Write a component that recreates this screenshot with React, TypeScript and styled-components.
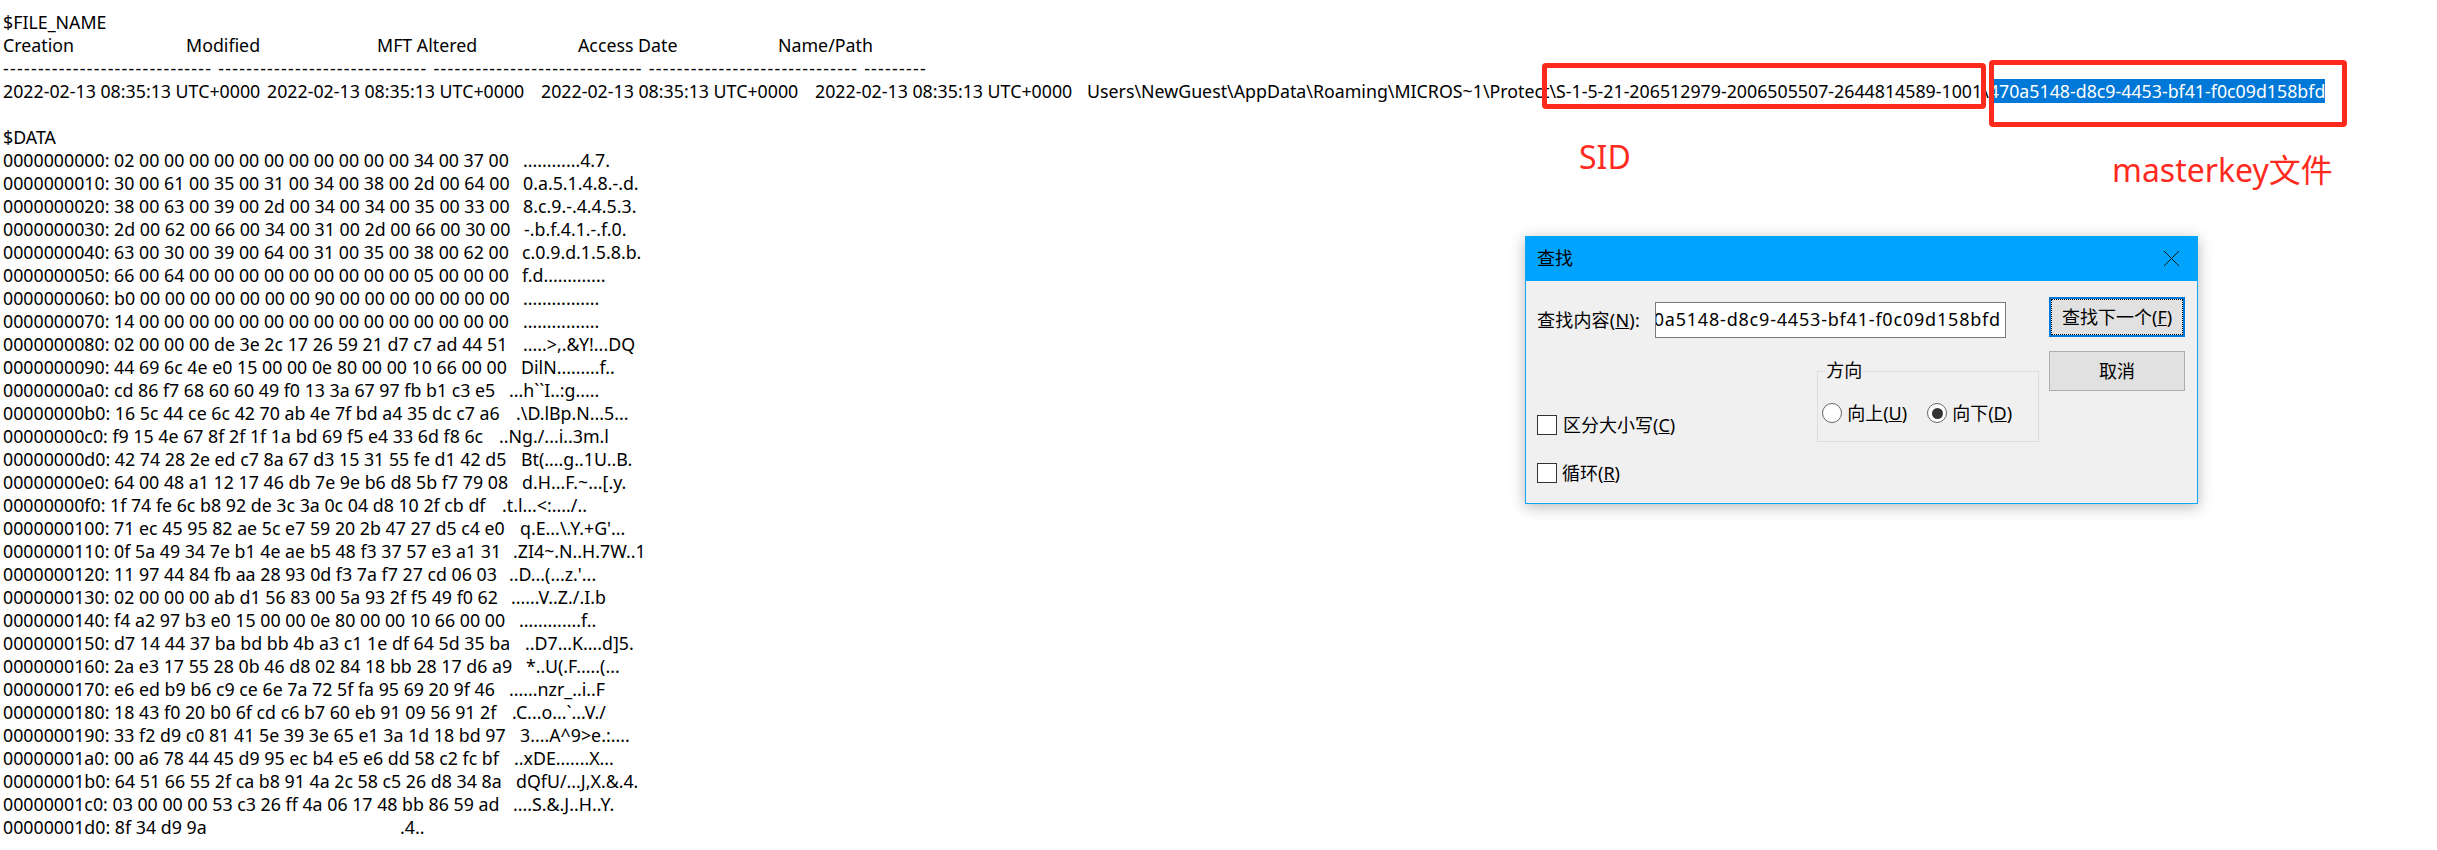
import { ReactNode } from 'react'
import styled, { createGlobalStyle } from 'styled-components'

const GlobalStyle = createGlobalStyle`
  html, body {
    margin: 0;
    padding: 0;
    background: #fff;
  }
  * {
    box-sizing: border-box;
  }
`

const CJK_STACK = `"Noto Sans", "Noto Sans CJK SC", sans-serif`

const Page = styled.div`
  position: relative;
  width: 2437px;
  height: 850px;
  overflow: hidden;
  padding: 11px 0 0 3px;
  background: #fff;
  color: #000;
  font-family: ${CJK_STACK};
  font-size: 17.8px;
  line-height: 23px;
  white-space: pre;
`

const Line = styled.div`
  height: 23px;
`

const HeaderRow = styled.div`
  display: grid;
  grid-template-columns: 183px 191px 201px 200px 1fr;
  height: 23px;
`

const DashRow = styled.div`
  display: flex;
  gap: 6px;
  height: 23px;
  letter-spacing: 1.25px;
`

const DateRow = styled.div`
  display: grid;
  grid-template-columns: 264px 274px 274px 272px 1fr;
  height: 23px;
`

const Selected = styled.span`
  background: #0078d7;
  color: #fff;
`

const HexRow = styled.div`
  display: grid;
  grid-template-columns: 400px 1fr;
  height: 23px;
`

const HexText = styled.span`
  grid-column: 1 / 3;
  grid-row: 1;
`

const AsciiCell = styled.span<{ $x: number }>`
  grid-column: 2;
  grid-row: 1;
  margin-left: ${(props) => props.$x - 403}px;
`

const RedBox = styled.div<{ $x: number; $y: number; $w: number; $h: number }>`
  position: absolute;
  left: ${(props) => props.$x}px;
  top: ${(props) => props.$y}px;
  width: ${(props) => props.$w}px;
  height: ${(props) => props.$h}px;
  border: 5px solid #ff2a1e;
  border-radius: 4px;
`

const RedLabel = styled.div<{ $x: number; $y: number }>`
  position: absolute;
  left: ${(props) => props.$x}px;
  top: ${(props) => props.$y}px;
  color: #ff2a1e;
  font-size: 32px;
  line-height: 44px;
`

// Find dialog
const Dialog = styled.div`
  position: absolute;
  left: 1525px;
  top: 236px;
  width: 673px;
  height: 268px;
  border: 1px solid #0ea5f5;
  background: #f0f0f0;
  box-shadow: 0 3px 14px rgba(0, 0, 0, 0.28);
  font-size: 18px;
  line-height: 24px;
`

const TitleBar = styled.div`
  display: flex;
  align-items: center;
  justify-content: space-between;
  height: 44px;
  padding: 0 17px 2px 11px;
  background: #00a4ff;
`

const DialogBody = styled.div`
  display: flex;
  padding: 16px 12px 0 11px;
`

const LeftColumn = styled.div`
  width: 513px;
`

const ButtonColumn = styled.div`
  display: flex;
  flex-direction: column;
  gap: 14px;
  width: 136px;
`

const SearchRow = styled.div`
  display: flex;
  align-items: center;
  margin-top: 5px;
`

const SearchLabel = styled.span`
  width: 118px;
  letter-spacing: 0.2px;
`

const SearchInput = styled.div`
  display: flex;
  justify-content: flex-end;
  width: 351px;
  height: 36px;
  padding-right: 4px;
  overflow: hidden;
  border: 1px solid #7a7a7a;
  background: #fff;
  letter-spacing: 0.8px;
  line-height: 32px;
`

const OptionsRow = styled.div`
  display: flex;
  justify-content: space-between;
  margin-top: 33px;
`

const CheckColumn = styled.div`
  display: flex;
  flex-direction: column;
  gap: 28px;
  padding-top: 44px;
`

const CheckRow = styled.div<{ $gap: number }>`
  display: flex;
  align-items: center;
  gap: ${(props) => props.$gap}px;
  height: 20px;
`

const CheckBox = styled.span`
  width: 20px;
  height: 20px;
  border: 1px solid #333;
  background: #fff;
`

const GroupBox = styled.div`
  position: relative;
  display: flex;
  width: 222px;
  height: 71px;
  margin-right: 10px;
  padding: 31px 0 0 4px;
  border: 1px solid #dcdcdc;
`

const GroupLegend = styled.span`
  position: absolute;
  left: 7px;
  top: -14px;
  padding: 0 1px;
  background: #f0f0f0;
`

const RadioOption = styled.div`
  display: flex;
  align-items: center;
  gap: 5px;
  width: 105px;
  height: 20px;
`

const Radio = styled.span<{ $checked?: boolean }>`
  display: flex;
  align-items: center;
  justify-content: center;
  width: 20px;
  height: 20px;
  border: 1px solid #666;
  border-radius: 50%;
  background: #fff;

  &::after {
    content: '';
    display: ${(props) => (props.$checked ? 'block' : 'none')};
    width: 11px;
    height: 11px;
    border-radius: 50%;
    background: #333;
  }
`

const DialogButton = styled.div<{ $focused?: boolean }>`
  display: flex;
  align-items: center;
  justify-content: center;
  height: 40px;
  border: ${(props) => (props.$focused ? '2px solid #0078d7' : '1px solid #adadad')};
  background: #e1e1e1;
  outline: ${(props) => (props.$focused ? '1px dotted #000' : 'none')};
  outline-offset: ${(props) => (props.$focused ? '-3px' : '0')};
`

const headers = ['Creation', 'Modified', 'MFT Altered', 'Access Date', 'Name/Path']
const dashes = [30, 30, 30, 30, 9]
const stamp = '2022-02-13 08:35:13 UTC+0000'

const rows: [string, string, string, number][] = [
  ['0000000000', '02 00 00 00 00 00 00 00 00 00 00 00 34 00 37 00', '............4.7.', 523],
  ['0000000010', '30 00 61 00 35 00 31 00 34 00 38 00 2d 00 64 00', '0.a.5.1.4.8.-.d.', 523],
  ['0000000020', '38 00 63 00 39 00 2d 00 34 00 34 00 35 00 33 00', '8.c.9.-.4.4.5.3.', 523],
  ['0000000030', '2d 00 62 00 66 00 34 00 31 00 2d 00 66 00 30 00', '-.b.f.4.1.-.f.0.', 524],
  ['0000000040', '63 00 30 00 39 00 64 00 31 00 35 00 38 00 62 00', 'c.0.9.d.1.5.8.b.', 522],
  ['0000000050', '66 00 64 00 00 00 00 00 00 00 00 00 05 00 00 00', 'f.d.............', 522],
  ['0000000060', 'b0 00 00 00 00 00 00 00 90 00 00 00 00 00 00 00', '................', 523],
  ['0000000070', '14 00 00 00 00 00 00 00 00 00 00 00 00 00 00 00', '................', 523],
  ['0000000080', '02 00 00 00 de 3e 2c 17 26 59 21 d7 c7 ad 44 51', '.....>,.&Y!...DQ', 523],
  ['0000000090', '44 69 6c 4e e0 15 00 00 0e 80 00 00 10 66 00 00', 'DilN.........f..', 521],
  ['00000000a0', 'cd 86 f7 68 60 60 49 f0 13 3a 67 97 fb b1 c3 e5', '...h``I..:g.....', 509],
  ['00000000b0', '16 5c 44 ce 6c 42 70 ab 4e 7f bd a4 35 dc c7 a6', '.\\D.lBp.N...5...', 516],
  ['00000000c0', 'f9 15 4e 67 8f 2f 1f 1a bd 69 f5 e4 33 6d f8 6c', '..Ng./...i..3m.l', 499],
  ['00000000d0', '42 74 28 2e ed c7 8a 67 d3 15 31 55 fe d1 42 d5', 'Bt(....g..1U..B.', 521],
  ['00000000e0', '64 00 48 a1 12 17 46 db 7e 9e b6 d8 5b f7 79 08', 'd.H...F.~...[.y.', 522],
  ['00000000f0', '1f 74 fe 6c b8 92 de 3c 3a 0c 04 d8 10 2f cb df', '.t.l...<:..../..', 502],
  ['0000000100', '71 ec 45 95 82 ae 5c e7 59 20 2b 47 27 d5 c4 e0', 'q.E...\\.Y.+G\'...', 520],
  ['0000000110', '0f 5a 49 34 7e b1 4e ae b5 48 f3 37 57 e3 a1 31', '.ZI4~.N..H.7W..1', 513],
  ['0000000120', '11 97 44 84 fb aa 28 93 0d f3 7a f7 27 cd 06 03', '..D...(...z.\'...', 509],
  ['0000000130', '02 00 00 00 ab d1 56 83 00 5a 93 2f f5 49 f0 62', '......V..Z./.I.b', 511],
  ['0000000140', 'f4 a2 97 b3 e0 15 00 00 0e 80 00 00 10 66 00 00', '.............f..', 519],
  ['0000000150', 'd7 14 44 37 ba bd bb 4b a3 c1 1e df 64 5d 35 ba', '..D7...K....d]5.', 525],
  ['0000000160', '2a e3 17 55 28 0b 46 d8 02 84 18 bb 28 17 d6 a9', '*..U(.F.....(...', 526],
  ['0000000170', 'e6 ed b9 b6 c9 ce 6e 7a 72 5f fa 95 69 20 9f 46', '......nzr_..i..F', 509],
  ['0000000180', '18 43 f0 20 b0 6f cd c6 b7 60 eb 91 09 56 91 2f', '.C...o...`...V./', 512],
  ['0000000190', '33 f2 d9 c0 81 41 5e 39 3e 65 e1 3a 1d 18 bd 97', '3....A^9>e.:....', 520],
  ['00000001a0', '00 a6 78 44 45 d9 95 ec b4 e5 e6 dd 58 c2 fc bf', '..xDE.......X...', 514],
  ['00000001b0', '64 51 66 55 2f ca b8 91 4a 2c 58 c5 26 d8 34 8a', 'dQfU/...J,X.&.4.', 516],
  ['00000001c0', '03 00 00 00 53 c3 26 ff 4a 06 17 48 bb 86 59 ad', '....S.&.J..H..Y.', 513],
  ['00000001d0', '8f 34 d9 9a', '.4..', 400],
]

const CloseIcon = () => (
  <svg width='17' height='17' viewBox='0 0 17 17' fill='none' stroke='#1a1a1a' strokeWidth='1'>
    <path d='M1 1L16 16M16 1L1 16' />
  </svg>
)

const Check = ({ gap, children }: { gap: number; children: ReactNode }) => (
  <CheckRow $gap={gap}>
    <CheckBox />
    <span>{children}</span>
  </CheckRow>
)

const App = () => {
  return (
    <Page>
      <GlobalStyle />
      <Line>$FILE_NAME</Line>
      <HeaderRow>
        {headers.map((header) => (
          <span key={header}>{header}</span>
        ))}
      </HeaderRow>
      <DashRow>
        {dashes.map((count, index) => (
          <span key={index}>{'-'.repeat(count)}</span>
        ))}
      </DashRow>
      <DateRow>
        <span>{stamp}</span>
        <span>{stamp}</span>
        <span>{stamp}</span>
        <span>{stamp}</span>
        <span>
          {'Users\\NewGuest\\AppData\\Roaming\\MICROS~1\\Protect\\S-1-5-21-206512979-2006505507-2644814589-1001\\'}
          <Selected>470a5148-d8c9-4453-bf41-f0c09d158bfd</Selected>
        </span>
      </DateRow>
      <Line />
      <Line>$DATA</Line>
      {rows.map(([offset, hex, ascii, x]) => (
        <HexRow key={offset}>
          <HexText>{`${offset}: ${hex}`}</HexText>
          <AsciiCell $x={x}>{ascii}</AsciiCell>
        </HexRow>
      ))}

      <RedBox $x={1542} $y={63} $w={444} $h={46} />
      <RedBox $x={1989} $y={60} $w={358} $h={67} />
      <RedLabel $x={1579} $y={135}>SID</RedLabel>
      <RedLabel $x={2112} $y={148}>masterkey文件</RedLabel>

      <Dialog>
        <TitleBar>
          <span>查找</span>
          <CloseIcon />
        </TitleBar>
        <DialogBody>
          <LeftColumn>
            <SearchRow>
              <SearchLabel>
                查找内容(<u>N</u>):
              </SearchLabel>
              <SearchInput>470a5148-d8c9-4453-bf41-f0c09d158bfd</SearchInput>
            </SearchRow>
            <OptionsRow>
              <CheckColumn>
                <Check gap={6}>
                  区分大小写(<u>C</u>)
                </Check>
                <Check gap={5}>
                  循环(<u>R</u>)
                </Check>
              </CheckColumn>
              <GroupBox>
                <GroupLegend>方向</GroupLegend>
                <RadioOption>
                  <Radio />
                  <span>
                    向上(<u>U</u>)
                  </span>
                </RadioOption>
                <RadioOption>
                  <Radio $checked />
                  <span>
                    向下(<u>D</u>)
                  </span>
                </RadioOption>
              </GroupBox>
            </OptionsRow>
          </LeftColumn>
          <ButtonColumn>
            <DialogButton $focused>
              <span>
                查找下一个(<u>F</u>)
              </span>
            </DialogButton>
            <DialogButton>取消</DialogButton>
          </ButtonColumn>
        </DialogBody>
      </Dialog>
    </Page>
  )
}

export default App
